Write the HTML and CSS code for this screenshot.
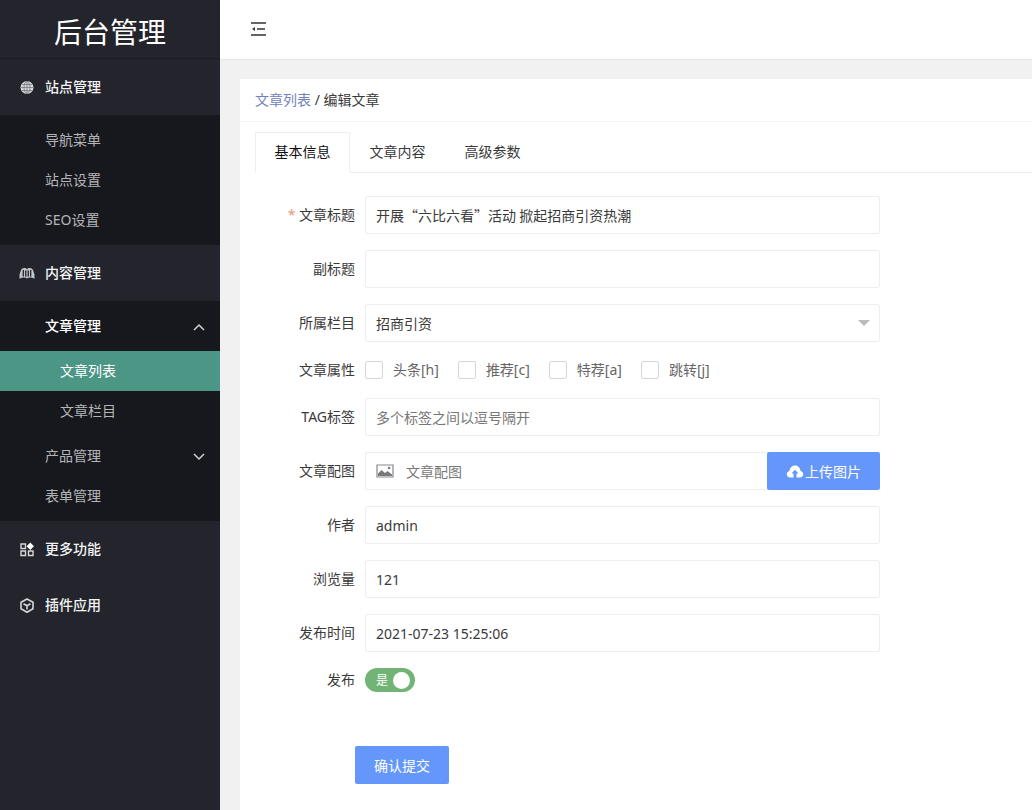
FILE: index.html
```
<!DOCTYPE html>
<html lang="zh-CN">
<head>
<meta charset="utf-8">
<title>后台管理</title>
<link rel="stylesheet" href="styles.css">
</head>
<body>
<div class="app">
  <aside class="sidebar">
    <h1 class="logo">后台管理</h1>
    <nav class="menu">
      <a class="group" href="#">
        <svg class="icon" viewBox="0 0 16 16"><circle cx="8" cy="8.500" r="6.500" fill="#d6d7da"/><g fill="none" stroke="#6a6c72" stroke-width=".7"><ellipse cx="8" cy="8.500" rx="3" ry="6.200"/><path d="M8 2.500v12M2 8.500h12M3 5.500h10M3 11.500h10"/></g></svg>
        站点管理</a>
      <div class="submenu">
        <a class="item" href="#">导航菜单</a>
        <a class="item" href="#">站点设置</a>
        <a class="item" href="#">SEO设置</a>
      </div>
      <a class="group" href="#">
        <svg class="icon" viewBox="0 0 16 16"><path d="M8 13.500c-1.500-1.200-4.500-1.300-7.500.3V9.500L2 5c.8-2 4.500-3 6-.8 1.500-2.200 5.200-1.200 6 .8l1.500 4.500v4.300c-3-1.600-6-1.500-7.500-.3z" fill="#c3c4c8"/><path d="M8 5v7M4.300 5v6.500M11.700 5v6.500" stroke="#23242c" stroke-width="1.300"/><path d="M8 4.500v8" stroke="#c3c4c8" stroke-width="1"/><path d="M6.600 5.500v6M9.400 5.500v6" stroke="#23242c" stroke-width="1"/><path d="M2 14.500l2.500-1.300M14 14.500l-2.500-1.300" stroke="#23242c" stroke-width=".8"/></svg>
        内容管理</a>
      <div class="submenu">
        <a class="item open" href="#">文章管理
          <svg class="arrow" viewBox="0 0 12 12"><path d="M1 10l5-5 5 5"/></svg></a>
        <div class="children">
          <a class="item active" href="#">文章列表</a>
          <a class="item" href="#">文章栏目</a>
        </div>
        <a class="item" href="#">产品管理
          <svg class="arrow" viewBox="0 0 12 12"><path d="M1 4l5 5 5-5"/></svg></a>
        <a class="item" href="#">表单管理</a>
      </div>
      <a class="group" href="#">
        <svg class="icon" viewBox="0 0 16 16" fill="none" stroke="#d6d7da" stroke-width="1.400"><path d="M2 3h4.500v4.500H2zM2 10h4.500v4.500H2zM9.500 10H14v4.500H9.500z"/><path d="M11.300 1.500L15 5.200l-3.700 3.700-3.700-3.700z" fill="#fff" stroke="none"/></svg>
        更多功能</a>
      <a class="group" href="#">
        <svg class="icon" viewBox="0 0 16 16" fill="none" stroke="#d6d7da" stroke-width="1.600" stroke-linejoin="round"><path d="M8 2l6 3.300v6.500L8 15.200l-6-3.400V5.300zM4.500 6.800L8 8.800l3.500-2M8 8.800v3.700"/></svg>
        插件应用</a>
    </nav>
  </aside>
  <div class="page">
    <header class="topbar">
      <button class="toggle" type="button" aria-label="收起菜单">
        <svg viewBox="0 0 16 16"><path d="M1 2h15M7 8h8M1 14h15" stroke="#333" stroke-width="1.500"/><path d="M2 8l3-2v4z" fill="#333"/></svg>
      </button>
    </header>
    <main class="card">
      <div class="crumbs"><a href="#">文章列表</a> / 编辑文章</div>
      <div class="body">
        <div class="tabs">
          <button class="tab current" type="button">基本信息</button>
          <button class="tab" type="button">文章内容</button>
          <button class="tab" type="button">高级参数</button>
        </div>
        <form class="form">
          <div class="row"><label class="label" for="title"><span class="star">*</span> 文章标题</label>
            <input class="field cjk" id="title" type="text" value="开展“六比六看”活动 掀起招商引资热潮"></div>
          <div class="row"><label class="label" for="subtitle">副标题</label>
            <input class="field" id="subtitle" type="text"></div>
          <div class="row"><label class="label" for="column">所属栏目</label>
            <div class="selectbox"><select class="field" id="column"><option>招商引资</option></select></div></div>
          <div class="row"><span class="label">文章属性</span>
            <div class="checks">
              <label class="check"><input type="checkbox">头条[h]</label>
              <label class="check"><input type="checkbox">推荐[c]</label>
              <label class="check"><input type="checkbox">特荐[a]</label>
              <label class="check"><input type="checkbox">跳转[j]</label>
            </div></div>
          <div class="row"><label class="label" for="tags">TAG标签</label>
            <input class="field" id="tags" type="text" placeholder="多个标签之间以逗号隔开"></div>
          <div class="row"><label class="label" for="image">文章配图</label>
            <div class="upload">
              <div class="field picture">
                <svg viewBox="0 0 18 14"><path d="M1 1h16v12H1z" fill="none" stroke="#85878a" stroke-width="1.200"/><path d="M2 12V9.500L5.500 6 9 9l2.500-2L16 10.500V12z" fill="#77797c"/><circle cx="13" cy="4" r="1.300" fill="#77797c"/></svg>
                <input id="image" type="text" placeholder="文章配图">
              </div>
              <button class="btn" type="button"><svg viewBox="0 0 18 14"><path d="M4.500 13.500C2 13.500.8 12 .8 10.200c0-1.700 1-2.900 2.600-3.300C4 3.500 6 1.500 9 1.500s5 2 5.600 5.400c1.600.4 2.600 1.600 2.600 3.300 0 1.800-1.200 3.300-3.700 3.300h-3V9.500h2L9 5.800 5.500 9.500h2v4z" fill="#fff"/></svg>上传图片</button>
            </div></div>
          <div class="row"><label class="label" for="author">作者</label>
            <input class="field" id="author" type="text" value="admin"></div>
          <div class="row"><label class="label" for="views">浏览量</label>
            <input class="field" id="views" type="text" value="121"></div>
          <div class="row"><label class="label" for="time">发布时间</label>
            <input class="field" id="time" type="text" value="2021-07-23 15:25:06"></div>
          <div class="row"><span class="label" id="publish">发布</span>
            <button class="switch" type="button" role="switch" aria-checked="true" aria-labelledby="publish">是<span class="knob"></span></button></div>
          <div class="actions"><button class="btn" type="submit">确认提交</button></div>
        </form>
      </div>
    </main>
  </div>
</div>
</body>
</html>
```
FILE: styles.css
```
* { box-sizing: border-box; }
body, button, input, select {
  font-family: "Noto Sans", "Noto Sans CJK SC", sans-serif;
  font-size: 14px;
}
body { margin: 0; line-height: 20px; color: #3a3a3a; background: #f1f1f1; overflow: hidden; }
a { text-decoration: none; color: inherit; }
button { cursor: pointer; }
.app { display: flex; min-height: 100vh; }

.sidebar { flex: 0 0 220px; background: #23242c; }
.logo {
  display: flex; align-items: center; justify-content: center;
  height: 59px; margin: 0; padding-top: 4px;
  border-bottom: 1px solid #1b1c23;
  color: #fff; font-size: 28px; line-height: 40px; font-weight: 400;
  font-family: "Noto Sans CJK SC", sans-serif;
}
.group {
  display: flex; align-items: center; gap: 10px;
  height: 56px; padding-left: 19px;
  color: #f4f4f5; font-weight: 500;
}
.icon { width: 16px; height: 16px; }
.submenu { padding: 5px 0; background: #17181d; }
.item {
  display: flex; align-items: center; justify-content: space-between;
  height: 40px; padding: 0 15px 0 45px; color: #b4b5b8;
}
.item.open { color: #fff; font-weight: 500; }
.children { padding: 5px 0; }
.children .item { padding-left: 60px; }
.children .active { background: #4b9685; color: #fff; }
.arrow { width: 12px; height: 12px; fill: none; stroke: #d0d1d3; stroke-width: 1.5; }

.page { flex: 1; min-width: 0; display: flex; flex-direction: column; }
.topbar {
  display: flex; align-items: center; height: 60px; padding: 0 30px 2px;
  background: #fff; border-bottom: 1px solid #e8e8e8;
}
.toggle { display: flex; padding: 0; border: 0; background: none; }
.toggle svg { width: 16px; height: 16px; }
.card { flex: 1; margin: 19px 0 0 20px; background: #fff; }
.crumbs { padding: 11px 15px; border-bottom: 1px solid #f5f5f5; }
.crumbs a { color: #7182be; }
.body { padding: 10px 0 0 15px; }
.tabs { display: flex; height: 41px; border-bottom: 1px solid #eee; }
.tab {
  width: 95px; height: 41px; padding: 0 0 3px;
  border: 1px solid transparent; background: none; color: #3a3a3a;
}
.tab.current { border-color: #eee; border-bottom-color: #fff; background: #fff; color: #111; }

.form { display: flex; flex-direction: column; gap: 16px; max-width: 625px; padding-top: 23px; }
.row { display: flex; align-items: center; gap: 10px; }
.label { flex: 0 0 100px; text-align: right; }
.star { color: #e09a7c; }
.field {
  flex: 1; min-width: 0; width: 100%; height: 38px; padding: 0 10px;
  border: 1px solid #eee; border-radius: 2px;
  background: #fff; color: #3a3a3a; outline: 0;
}
.cjk { font-family: "Noto Sans CJK SC", sans-serif; }
input::placeholder { color: #777; opacity: 1; }
.selectbox { flex: 1; display: flex; position: relative; }
.selectbox select { appearance: none; }
.selectbox::after {
  content: ""; position: absolute; right: 10px; top: 16px; pointer-events: none;
  border: 6px solid transparent; border-top-color: #bbb; border-bottom: 0;
}
.checks { display: flex; gap: 19px; }
.check { display: flex; align-items: center; gap: 10px; height: 24px; color: #666; }
.check input {
  appearance: none; width: 18px; height: 18px; margin: 0;
  border: 1px solid #d6d6d6; border-radius: 2px; background: #fff;
}
.upload { flex: 1; display: flex; }
.picture { display: flex; align-items: center; gap: 12px; border-right: 0; }
.picture svg { width: 18px; height: 14px; }
.picture input { flex: 1; min-width: 0; padding: 0; border: 0; outline: 0; }
.btn {
  display: flex; align-items: center; justify-content: center; gap: 1px;
  height: 38px; padding: 0 19px; border: 0; border-radius: 2px;
  background: #6497f9; color: #fff;
}
.btn svg { width: 18px; height: 14px; }
.switch {
  display: flex; align-items: center; justify-content: space-between;
  width: 50px; height: 24px; padding: 0 5px 0 11px;
  border: 0; border-radius: 12px; background: #71b475; color: #fff; font-size: 12px;
}
.knob { width: 17px; height: 17px; border-radius: 50%; background: #fff; }
.actions { padding: 38px 0 26px 100px; }
```
